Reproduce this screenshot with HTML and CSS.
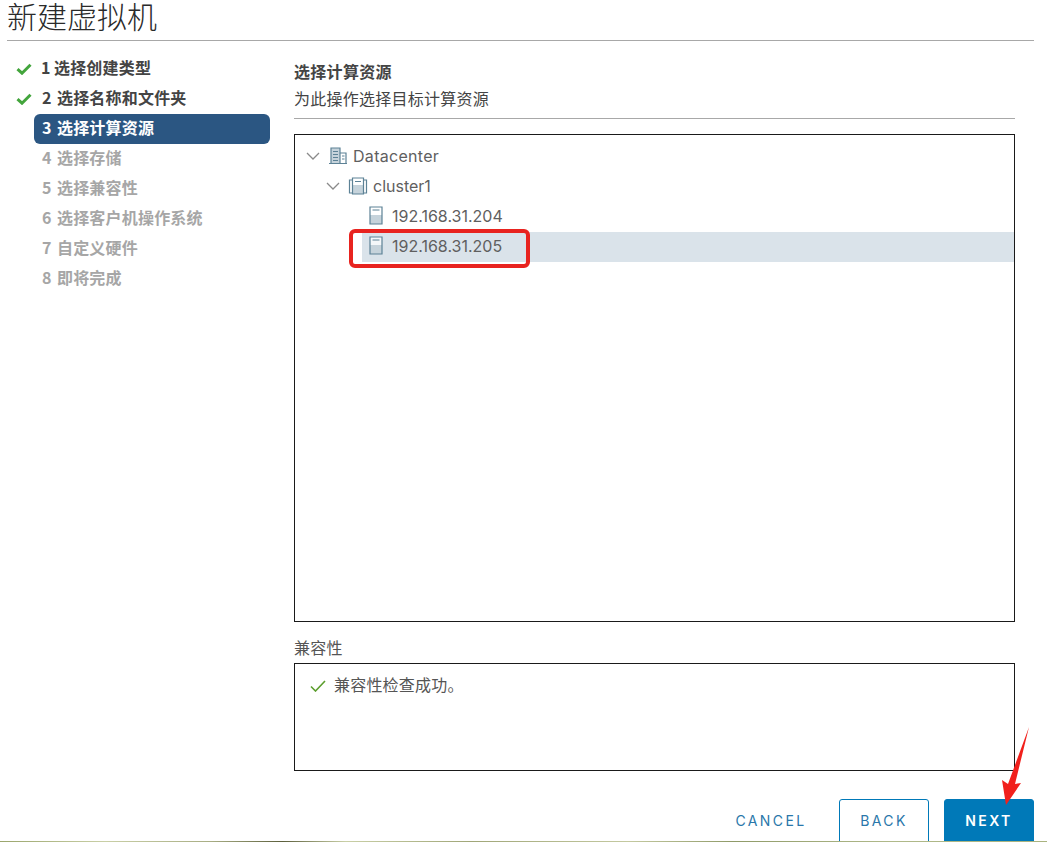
FILE: index.html
```html
<!DOCTYPE html>
<html lang="zh-CN">
<head>
<meta charset="utf-8">
<title>新建虚拟机</title>
<link rel="stylesheet" href="styles.css">
</head>
<body>
<div class="app">
  <header class="head"><h1>新建虚拟机</h1></header>
  <div class="main">
    <nav class="steps">
      <div class="step done"><svg class="tick" viewBox="0 0 16 12"><path d="M1.500 6.200 6 10.200 14.500 1.800" /></svg>1 选择创建类型</div>
      <div class="step done"><svg class="tick" viewBox="0 0 16 12"><path d="M1.500 6.200 6 10.200 14.500 1.800" /></svg>2 选择名称和文件夹</div>
      <div class="step active">3 选择计算资源</div>
      <div class="step todo">4 选择存储</div>
      <div class="step todo">5 选择兼容性</div>
      <div class="step todo">6 选择客户机操作系统</div>
      <div class="step todo">7 自定义硬件</div>
      <div class="step todo">8 即将完成</div>
    </nav>
    <section class="content">
      <div class="title">选择计算资源</div>
      <div class="subtitle">为此操作选择目标计算资源</div>
      <div class="tree">
        <div class="node lvl0">
          <svg class="chev" viewBox="0 0 14 8"><path d="M1 1 7 7 13 1"/></svg>
          <svg class="ico" viewBox="0 0 20 18"><path class="fill" d="M3 1h9v15H3z"/><path class="line" d="M3 16V1h9v15M12 6h6v10M1 16.500h18M5 4.500h5M5 7.500h5M5 10.500h5M5 13.500h5M14 9h2.500M14 12h2.500"/></svg>
          <span class="wide">Datacenter</span>
        </div>
        <div class="node lvl1">
          <svg class="chev" viewBox="0 0 14 8"><path d="M1 1 7 7 13 1"/></svg>
          <svg class="ico" viewBox="0 0 20 18"><path class="line" d="M4 3H1.500v13H4M16 3h2.500v13H16"/><path class="fill" d="M5 8h10v9H5z"/><path class="line" d="M4.500 1h11v16h-11zM7 4.500h6"/></svg>
          <span>cluster1</span>
        </div>
        <div class="node lvl2">
          <svg class="host" viewBox="0 0 14 19"><path class="fill" d="M1 9h12v9H1z"/><path class="line" d="M1 1h12v17H1zM3.500 4h7"/></svg>
          <span>192.168.31.204</span>
        </div>
        <div class="node lvl2 selected">
          <svg class="host" viewBox="0 0 14 19"><path class="fillw" d="M1 1h12v17H1z"/><path class="fill" d="M1 9h12v9H1z"/><path class="line" d="M1 1h12v17H1zM3.500 4h7"/></svg>
          <span>192.168.31.205</span>
        </div>
      </div>
      <div class="label">兼容性</div>
      <div class="compat">
        <svg class="ok" viewBox="0 0 16 12"><path d="M1 6.500 5.500 11 15 1"/></svg>
        <span>兼容性检查成功。</span>
      </div>
      <div class="actions">
        <button class="btn link">CANCEL</button>
        <button class="btn outline">BACK</button>
        <button class="btn primary">NEXT</button>
      </div>
    </section>
  </div>
  <div class="strip"></div>
  <div class="mark-box"></div>
  <svg class="mark-arrow" viewBox="0 0 40 90"><path d="M35 1 21 58 27 57 12 79 8 54 14 58Z"/></svg>
</div>
</body>
</html>
```
FILE: styles.css
```css
* { box-sizing: border-box; }
html, body { margin: 0; padding: 0; background: #fff; }
.app {
  position: relative;
  width: 1047px;
  height: 842px;
  overflow: hidden;
  font-family: "Noto Sans CJK SC", "Noto Sans", sans-serif;
  color: #565656;
}
.head {
  height: 41px;
  margin: 0 13px 0 7px;
  border-bottom: 1px solid #a8a8a8;
}
.head h1 {
  margin: 0;
  font-size: 30px;
  font-weight: 300;
  line-height: 30px;
  height: 36px;
  color: #2a2a2a;
}
.main { display: flex; height: 801px; }
.steps {
  width: 294px;
  flex: none;
  padding: 13px 24px 0 14px;
  font-size: 16px;
  font-weight: 700;
}
.step {
  position: relative;
  height: 30px;
  line-height: 27px;
  margin-left: 20px;
  padding-left: 8px;
  border-radius: 6px;
  white-space: nowrap;
  letter-spacing: 0.200px;
  word-spacing: 1.500px;
}
.step:first-child { padding-left: 7px; word-spacing: -0.500px; }
.step.done { color: #444; }
.step.active { background: #2b5682; color: #fff; }
.step.todo { color: #a6a6a6; }
.tick {
  position: absolute;
  left: -18px;
  top: 9px;
  width: 16px;
  height: 12px;
  fill: none;
  stroke: #43a53c;
  stroke-width: 3;
}
.content { width: 721px; flex: none; display: flex; flex-direction: column; }
.title {
  flex: none;
  margin-top: 19px;
  height: 22px;
  line-height: 22px;
  font-size: 16px;
  font-weight: 700;
  letter-spacing: 0.300px;
  color: #444;
}
.subtitle {
  flex: none;
  height: 33px;
  line-height: 24px;
  margin-top: 4px;
  margin-bottom: 15px;
  font-size: 16px;
  letter-spacing: 0.250px;
  color: #444;
  border-bottom: 1px solid #a8a8a8;
}
.tree {
  flex: none;
  height: 488px;
  border: 1px solid #1a1a1a;
  padding-top: 7px;
  font-family: "Inter", "Noto Sans", sans-serif;
  font-size: 16px;
  color: #5f5f5f;
}
.node { display: flex; align-items: center; height: 30px; padding-bottom: 2px; white-space: nowrap; }
.lvl0 { padding-left: 11px; }
.lvl1 { padding-left: 31px; }
.lvl2 { padding-left: 74px; }
.selected { margin-left: 67px; padding-left: 7px; background: #dae3ea; }
.wide { letter-spacing: 0.300px; }
.chev {
  width: 14px;
  height: 8px;
  margin-right: 8px;
  fill: none;
  stroke: #8a8a8a;
  stroke-width: 1.300;
}
.ico { width: 20px; height: 18px; margin-right: 5px; }
.host { width: 14px; height: 19px; margin-right: 9px; margin-top: -1px; }
.line { fill: none; stroke: #5d8296; stroke-width: 1.200; }
.fill { fill: #c6d3db; }
.fillw { fill: #f4f7f9; }
.label {
  flex: none;
  height: 41px;
  line-height: 50px;
  font-size: 16px;
  letter-spacing: 0.250px;
  color: #555;
}
.compat {
  flex: none;
  height: 108px;
  border: 1px solid #1a1a1a;
  padding: 9px 0 0 15px;
  display: flex;
  align-items: flex-start;
  font-size: 16px;
  line-height: 22px;
  letter-spacing: 0.200px;
  color: #555;
}
.ok {
  width: 16px;
  height: 12px;
  margin: 7px 8px 0 0;
  fill: none;
  stroke: #5c9e2e;
  stroke-width: 1.600;
}
.actions {
  flex: none;
  display: flex;
  justify-content: flex-end;
  gap: 15px;
  margin-top: 28px;
  margin-right: -19px;
}
.btn {
  width: 90px;
  height: 46px;
  border-radius: 3px;
  font-family: "Inter", "Lato", sans-serif;
  font-size: 14px;
  font-weight: 500;
  letter-spacing: 2.400px;
  border: 1px solid #0079b8;
  background: #fff;
  color: #2a77aa;
  padding: 0 0 3px;
}
.btn.link { border: 0; background: none; margin-right: 8px; font-weight: 400; }
.btn.outline { font-weight: 400; }
.btn.primary { background: #0079b8; color: #fff; font-weight: 600; }
.strip {
  position: absolute;
  left: 0;
  right: 0;
  bottom: 0;
  height: 1px;
  background: linear-gradient(90deg, #9aa56c, #c9cfa6 10%, #a9ae85 20%, #5c5f3c 27%, #c9cfa6 33%, #a0a678 45%, #c4c9a0 60%, #8f9a68 70%, #b0b98a 85%, #a9b37f);
}
.mark-box {
  position: absolute;
  left: 349px;
  top: 229px;
  width: 181px;
  height: 39px;
  border: 4px solid #e8231f;
  border-radius: 6px;
}
.mark-arrow {
  position: absolute;
  left: 994px;
  top: 726px;
  width: 40px;
  height: 90px;
  fill: #f1201c;
}
```
